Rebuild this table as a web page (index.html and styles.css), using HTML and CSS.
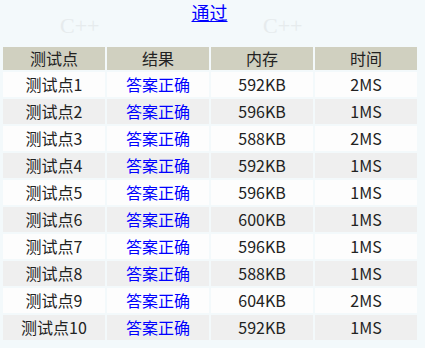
FILE: index.html
```html
<!DOCTYPE html>
<html>
<head>
<meta charset="utf-8">
<link rel="stylesheet" href="styles.css">
</head>
<body>
<div class="wm" aria-hidden="true">
  <span class="mark m1">C++</span>
  <span class="mark m2">C++</span>
</div>
<div class="page">
  <div class="title"><a href="#">通过</a></div>
  <table class="result">
    <thead>
      <tr><th>测试点</th><th>结果</th><th>内存</th><th>时间</th></tr>
    </thead>
    <tbody>
      <tr><td>测试点1</td><td class="ok">答案正确</td><td>592KB</td><td>2MS</td></tr>
      <tr><td>测试点2</td><td class="ok">答案正确</td><td>596KB</td><td>1MS</td></tr>
      <tr><td>测试点3</td><td class="ok">答案正确</td><td>588KB</td><td>2MS</td></tr>
      <tr><td>测试点4</td><td class="ok">答案正确</td><td>592KB</td><td>1MS</td></tr>
      <tr><td>测试点5</td><td class="ok">答案正确</td><td>596KB</td><td>1MS</td></tr>
      <tr><td>测试点6</td><td class="ok">答案正确</td><td>600KB</td><td>1MS</td></tr>
      <tr><td>测试点7</td><td class="ok">答案正确</td><td>596KB</td><td>1MS</td></tr>
      <tr><td>测试点8</td><td class="ok">答案正确</td><td>588KB</td><td>1MS</td></tr>
      <tr><td>测试点9</td><td class="ok">答案正确</td><td>604KB</td><td>2MS</td></tr>
      <tr><td>测试点10</td><td class="ok">答案正确</td><td>592KB</td><td>1MS</td></tr>
    </tbody>
  </table>
</div>
</body>
</html>
```
FILE: styles.css
```css
html, body {
  margin: 0;
  padding: 0;
  background: #f3f9fb;
  font-family: "Noto Sans CJK SC", "Noto Sans", sans-serif;
  color: #222;
}
.wm {
  position: absolute;
  inset: 0;
  overflow: hidden;
  pointer-events: none;
}
.mark {
  position: absolute;
  font-family: "Liberation Serif", serif;
  font-size: 22px;
  color: #e6ebed;
  line-height: 1;
}
.m1 { left: 60px; top: 15px; }
.m2 { left: 263px; top: 15px; }
.page {
  position: relative;
  width: 419px;
}
.title {
  text-align: center;
  font-size: 18px;
  line-height: 24px;
  height: 45px;
}
.title a {
  color: #0000ff;
  text-decoration: underline;
}
.result {
  width: 418px;
  margin-left: 1px;
  border-spacing: 2px;
  table-layout: fixed;
  font-size: 16px;
}
.result th, .result td {
  text-align: center;
  padding: 0;
  font-weight: normal;
}
.result th {
  background: #d0d0c0;
  height: 23px;
  line-height: 23px;
  color: #222;
}
.result td {
  height: 25px;
  line-height: 25px;
}
.result tbody tr:nth-child(odd) td { background: #fdfdfd; }
.result tbody tr:nth-child(even) td { background: #efefef; }
.result td.ok { color: #0000ff; }
```
